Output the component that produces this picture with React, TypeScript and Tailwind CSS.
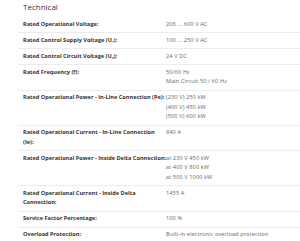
const ROWS: { label: string; values: string[]; nowrap?: boolean }[] = [
  { label: "Rated Operational Voltage:", values: ["208 ... 600 V AC"] },
  { label: "Rated Control Supply Voltage (Uₛ):", values: ["100 ... 250 V AC"] },
  { label: "Rated Control Circuit Voltage (U꜀):", values: ["24 V DC"] },
  { label: "Rated Frequency (f):", values: ["50/60 Hz", "Main Circuit 50 / 60 Hz"] },
  {
    label: "Rated Operational Power - In-Line Connection (Pe):",
    values: ["(230 V) 250 kW", "(400 V) 450 kW", "(500 V) 600 kW"],
    nowrap: true,
  },
  { label: "Rated Operational Current - In-Line Connection (Ie):", values: ["840 A"] },
  {
    label: "Rated Operational Power - Inside Delta Connection:",
    values: ["at 230 V 450 kW", "at 400 V 800 kW", "at 500 V 1000 kW"],
    nowrap: true,
  },
  { label: "Rated Operational Current - Inside Delta Connection:", values: ["1455 A"] },
  { label: "Service Factor Percentage:", values: ["100 %"] },
  { label: "Overload Protection:", values: ["Built-in electronic overload protection"] },
];

export default function App() {
  return (
    <div
      className="w-[300px] h-[241px] overflow-hidden bg-white pl-[18px]"
      style={{ fontFamily: "'Open Sans', 'DejaVu Sans', sans-serif" }}
    >
      <h3 className="pl-[5px] pt-[1px] h-[17px] text-[8px] leading-[11px] text-[#333]">Technical</h3>
      <div>
        {ROWS.map((row, i) => (
          <div
            key={i}
            className={
              "grid grid-cols-[148px_1fr] py-[2.75px] " +
              (i > 0 ? "border-t border-[#ececec]" : "")
            }
          >
            <div
              className={
                "pl-[5px] pr-[6px] text-[5.6px] leading-[9.5px] font-bold text-[#333] " +
                (row.nowrap ? "whitespace-nowrap" : "")
              }
            >
              {row.label}
            </div>
            <div className="text-[5.6px] leading-[9.5px] text-[#666] whitespace-nowrap tracking-[0.1px]">
              {row.values.map((v) => (
                <div key={v}>{v}</div>
              ))}
            </div>
          </div>
        ))}
      </div>
    </div>
  );
}
